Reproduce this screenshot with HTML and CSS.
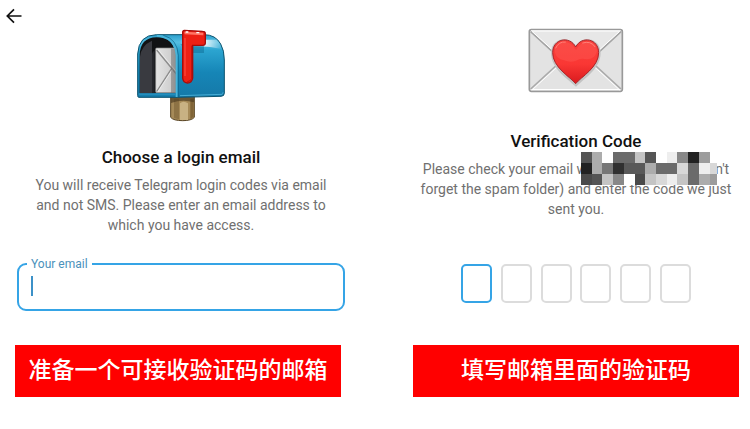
FILE: index.html
```html
<!DOCTYPE html>
<html lang="en">
<head>
    <meta charset="UTF-8">
    <meta name="viewport" content="width=device-width, initial-scale=1">
    <title>Login email</title>
    <link rel="stylesheet" href="styles.css">
</head>
<body>
    <header class="topbar">
        <button class="back" type="button" aria-label="Back">
            <svg width="16" height="16" viewBox="0 0 16 16" fill="none" stroke="#111" stroke-width="1.7">
                <path d="M15.5 8H1.5M8 1.3L1.3 8L8 14.7" />
            </svg>
        </button>
    </header>

    <main class="steps">
        <section class="step step-email">
            <svg class="art" width="90" height="94" viewBox="36 24 270 282" aria-hidden="true">
                <defs>
                    <linearGradient id="body" x1="0" y1="0" x2="0" y2="1">
                        <stop offset="0" stop-color="#2c9fcc" />
                        <stop offset=".12" stop-color="#55bfe2" />
                        <stop offset=".25" stop-color="#2ba4d0" />
                        <stop offset=".6" stop-color="#1686b7" />
                        <stop offset="1" stop-color="#1579a8" />
                    </linearGradient>
                    <linearGradient id="paper" x1="0" y1="0" x2="1" y2="0">
                        <stop offset="0" stop-color="#e4e4e4" />
                        <stop offset=".7" stop-color="#d0d0d0" />
                        <stop offset="1" stop-color="#b5b5b5" />
                    </linearGradient>
                    <linearGradient id="shine" x1="0" y1="0" x2="1" y2="0">
                        <stop offset="0" stop-color="#fff" stop-opacity="0" />
                        <stop offset=".6" stop-color="#fff" stop-opacity=".85" />
                        <stop offset="1" stop-color="#fff" stop-opacity="0" />
                    </linearGradient>
                </defs>
                <path d="M140 230H211V292Q203 302 176 302Q148 302 140 292Z" fill="#a68a58" stroke="#5a4524" stroke-width="3" />
                <path d="M150 236H165V298L150 294Z" fill="#8d7244" />
                <path d="M168 250Q178 240 192 250V300H168Z" fill="#c8b183" />
                <path d="M199 236H209V291L199 297Z" fill="#806437" />
                <path d="M141 232H210V247Q176 237 141 249Z" fill="#4b3a22" opacity=".65" />
                <path d="M97 44H240Q275 44 290 72Q301 91 301 120V219Q301 229 291 229L161 232H44Q41 232 41 226V102Q44 45 97 44Z" fill="url(#body)" stroke="#0b536f" stroke-width="3" />
                <path d="M47 220V105Q48 53 98 52Q151 52 154 106V220Z" fill="#111214" />
                <path d="M48 220V110Q52 76 84 62V220Z" fill="#393a40" />
                <path d="M84 100V220H92V90Z" fill="#25262b" />
                <rect x="95" y="84" width="62" height="134" rx="3" fill="url(#paper)" stroke="#888" stroke-width="2" />
                <path d="M98 90L157 162M98 215L143 145" fill="none" stroke="#8c8c8c" stroke-width="4" />
                <path d="M101 87L157 155M101 216L145 149" fill="none" stroke="#f3f3f3" stroke-width="2" />
                <rect x="141" y="86" width="15" height="132" fill="#555" opacity=".4" />
                <path d="M99 47Q154 50 158 106V231" fill="none" stroke="#49b5da" stroke-width="6" />
                <path d="M118 46Q160 57 163 106V231" fill="none" stroke="#086087" stroke-width="2" />
                <path d="M44 223H156" stroke="#238ebc" stroke-width="6" />
                <path d="M168 227L294 223Q297 222 297 217" fill="none" stroke="#47add4" stroke-width="3" />
                <path d="M165 59H278Q291 73 295 88Q260 77 166 78Z" fill="url(#shine)" />
                <path d="M169 72H240V99H205V84L176 82Z" fill="#075e86" opacity=".4" />
                <path d="M181 31L236 34Q244 34 244 41V69Q244 76 236 76H206V174Q204 189 190 189Q177 188 176 174V37Q176 31 181 31Z" fill="#ed2015" stroke="#a60c0b" stroke-width="4" />
                <path d="M181 35L238 38V46L182 43Z" fill="#ff7565" />
                <path d="M203 77V175Q201 184 190 185" fill="none" stroke="#bd100d" stroke-width="3" />
                <path d="M183 54V168" stroke="#ff4639" stroke-width="4" />
                <path d="M185 36H193M217 38H226" stroke="#fff" stroke-width="4" />
            </svg>
            <h1 class="title">Choose a login email</h1>
            <p class="hint">
                You will receive Telegram login codes via email<br>
                and not SMS. Please enter an email address to<br>
                which you have access.
            </p>
            <fieldset class="field">
                <legend><label for="email">Your email</label></legend>
                <input id="email" type="email">
            </fieldset>
            <p class="banner" lang="zh-CN">准备一个可接收验证码的邮箱</p>
        </section>

        <section class="step step-code">
            <svg class="art" width="96" height="65" viewBox="39 24 288 195" aria-hidden="true">
                <defs>
                    <linearGradient id="heart" x1="0" y1="0" x2="0" y2="1">
                        <stop offset="0" stop-color="#f8403c" />
                        <stop offset=".55" stop-color="#fa3734" />
                        <stop offset="1" stop-color="#d91a1e" />
                    </linearGradient>
                </defs>
                <rect x="43" y="29" width="279" height="185" rx="6" fill="#e3e3e3" stroke="#999" stroke-width="5" />
                <path d="M48 33H317M48 209H317" stroke="#fff" stroke-width="4" />
                <path d="M47 207L145 117M318 207L220 117" stroke="#aaa" stroke-width="5" />
                <path d="M51 210L149 120M314 210L216 120" stroke="#fff" stroke-width="3" />
                <path d="M47 35L158 137Q183 156 208 137L318 35" fill="#e7e7e7" stroke="#a4a4a4" stroke-width="5" />
                <path d="M51 34L160 133Q183 150 206 133L314 34" fill="none" stroke="#fff" stroke-width="3" />
                <path d="M183 200C158 176 108 146 108 98C108 54 163 44 183 77C202 44 257 54 257 98C257 146 207 176 183 200Z" fill="#c3c3c3" />
                <path d="M182 191C165 170 113 142 113 98C113 56 164 46 182 81C200 46 251 56 251 98C251 142 199 170 182 191Z" fill="url(#heart)" stroke="#a9262b" stroke-width="3" />
                <path d="M119 94C121 60 165 57 180 87Q183 90 186 87C201 57 244 60 246 94Q239 119 215 118Q197 113 183 122Q166 129 147 121Q123 117 119 94Z" fill="#ff625b" opacity=".35" />
                <path d="M122 84Q131 64 151 66M203 69Q227 61 240 80" fill="none" stroke="#ff8078" stroke-width="3" stroke-linecap="round" />
            </svg>
            <h1 class="title">Verification Code</h1>
            <p class="hint">
                Please check your email w<span class="redacted">
                    <svg class="mosaic" viewBox="0 0 127 30" preserveAspectRatio="none" shape-rendering="crispEdges" aria-hidden="true">
                        <rect width="127" height="30" fill="#fff" />
                        <g stroke-width="10" fill="none">
                            <path stroke="#555" d="M0 5h10M10 25h10M60 5h10" />
                            <path stroke="#acacac" d="M10 5h10M10 15h10M60 15h10M110 25h10" />
                            <path stroke="#6b6b6b" d="M30 5h20M70 15h20M100 15h10M100 25h10" />
                            <path stroke="#c4c4c4" d="M50 5h10M20 25h10M60 25h10M90 25h10" />
                            <path stroke="#eee" d="M80 5h10M110 15h10M80 25h10" />
                            <path stroke="#888" d="M90 5h10M30 25h10" />
                            <path stroke="#222" d="M100 5h10M0 15h10" />
                            <path stroke="#9c9c9c" d="M110 5h10M120 25h7" />
                            <path stroke="#777" d="M20 15h10" />
                            <path stroke="#303030" d="M30 15h10" />
                            <path stroke="#595959" d="M40 15h20" />
                            <path stroke="#d8d8d8" d="M90 15h10M120 15h7M70 25h10" />
                            <path stroke="#4a4a4a" d="M0 25h10M50 25h10" />
                        </g>
                    </svg></span>n't<br>
                forget the spam folder) and enter the code we just<br>
                sent you.
            </p>
            <div class="code" role="group" aria-label="Verification code">
                <input class="digit active" type="text" inputmode="numeric" maxlength="1" aria-label="Digit 1">
                <input class="digit" type="text" inputmode="numeric" maxlength="1" aria-label="Digit 2">
                <input class="digit" type="text" inputmode="numeric" maxlength="1" aria-label="Digit 3">
                <input class="digit" type="text" inputmode="numeric" maxlength="1" aria-label="Digit 4">
                <input class="digit" type="text" inputmode="numeric" maxlength="1" aria-label="Digit 5">
                <input class="digit" type="text" inputmode="numeric" maxlength="1" aria-label="Digit 6">
            </div>
            <p class="banner" lang="zh-CN">填写邮箱里面的验证码</p>
        </section>
    </main>
</body>
</html>
```
FILE: styles.css
```css
* {
    box-sizing: border-box;
}

body {
    margin: 0;
    background-color: #fff;
    font-family: Roboto, "Noto Sans CJK SC", sans-serif;
}

.topbar {
    display: flex;
    padding: 8px 6px 0;
}

.back {
    padding: 0;
    border: 0;
    background: none;
    line-height: 0;
}

.steps {
    display: grid;
    grid-template-columns: 1fr 1fr;
}

.step {
    display: flex;
    flex-direction: column;
    align-items: center;
    padding-top: 4px;
}

.step-email {
    padding-left: 17px;
    padding-right: 30px;
}

.step-code {
    padding-left: 38px;
    padding-right: 11px;
}

.title {
    margin: 23px 0 6px;
    font-size: 17px;
    font-weight: 500;
    line-height: 24px;
    color: #111;
}

.step-code .title {
    margin-top: 36px;
}

.hint {
    margin: 0;
    font-size: 14px;
    line-height: 20px;
    text-align: center;
    white-space: nowrap;
    color: #707070;
}

.redacted {
    display: inline-block;
    position: relative;
    width: 128px;
}

/* covers the address and the top of the line below it */
.mosaic {
    position: absolute;
    left: -6px;
    top: -22px;
    width: 136px;
    height: 33px;
}

.field {
    width: 100%;
    margin: 22px 0 34px;
    padding: 0 12px;
    border: 2px solid #35a4e6;
    border-radius: 9px;
}

.field legend {
    padding: 0 4px;
    margin-left: -4px;
    font-size: 12px;
    line-height: 14px;
    color: #4b91bb;
}

/* the caret is a fixed bar at the start of the box */
.field input {
    display: block;
    width: 100%;
    height: 38px;
    padding: 0 8px;
    border: 0;
    outline: 0;
    background: linear-gradient(#3c91c8, #3c91c8) no-repeat 0 5px / 2px 20px;
    font: inherit;
}

.code {
    display: flex;
    justify-content: space-between;
    width: 230px;
    margin: 45px 0 42px;
}

.digit {
    width: 31px;
    height: 39px;
    padding: 0;
    border: 2px solid #dcdcdc;
    border-radius: 5px;
    outline: 0;
    font-size: 18px;
    text-align: center;
}

.digit.active {
    border-color: #35a4e6;
}

.banner {
    align-self: stretch;
    margin: 0;
    padding-bottom: 6px;
    background-color: #f00;
    color: #fff;
    font-family: "Noto Sans CJK SC", sans-serif;
    font-size: 23px;
    font-weight: 500;
    line-height: 46px;
    text-align: center;
}

.step-email .banner {
    margin-left: -2px;
    margin-right: 4px;
}
```
